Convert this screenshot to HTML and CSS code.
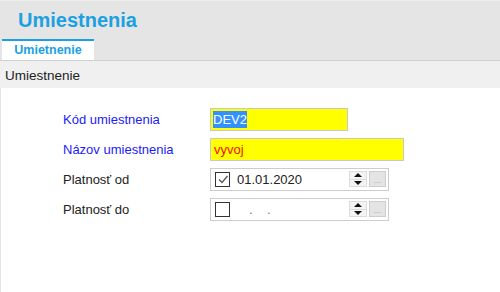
FILE: index.html
```html
<!DOCTYPE html>
<html lang="sk">
<head>
    <meta charset="UTF-8">
    <title>Umiestnenia</title>
    <link rel="stylesheet" href="styles.css">
</head>
<body>
    <header class="top">
        <h1 class="title">Umiestnenia</h1>
        <div class="tabs">
            <div class="tab active">Umietnenie</div>
        </div>
    </header>

    <div class="band">Umiestnenie</div>

    <main class="form">
        <div class="row">
            <label class="lbl req">Kód umiestnenia</label>
            <div class="input short"><span class="sel">DEV2</span></div>
        </div>
        <div class="row">
            <label class="lbl req">Názov umiestnenia</label>
            <div class="input long red">vyvoj</div>
        </div>
        <div class="row">
            <label class="lbl">Platnosť od</label>
            <div class="date">
                <span class="check on">
                    <svg width="12" height="12" viewBox="0 0 12 12"><path d="M2 6.5 L5 9.5 L10.5 3" fill="none" stroke="#555" stroke-width="1.3"/></svg>
                </span>
                <span class="dtext">01.01.2020</span>
                <span class="spin"><span class="up"></span><span class="down"></span></span>
                <span class="dots">...</span>
            </div>
        </div>
        <div class="row">
            <label class="lbl">Platnosť do</label>
            <div class="date">
                <span class="check"></span>
                <span class="dtext empty">.&nbsp;&nbsp;&nbsp;&nbsp;.</span>
                <span class="spin"><span class="up"></span><span class="down"></span></span>
                <span class="dots">...</span>
            </div>
        </div>
    </main>
</body>
</html>
```

FILE: styles.css
```css
body {
    margin: 0;
    font-family: 'Liberation Sans', Arial, sans-serif;
    background: #fff;
    height: 292px;
    display: flex;
    flex-direction: column;
}
.top {
    height: 61px;
    background: #e5e5e5;
    border-top: 1px solid #eeeeee;
    border-bottom: 1px solid #d2d2d2;
    box-sizing: border-box;
    display: flex;
    flex-direction: column;
    justify-content: space-between;
}
.title {
    margin: 0;
    padding: 7px 0 0 18px;
    font-size: 20px;
    font-weight: bold;
    color: #1ba1e2;
    line-height: 24px;
}
.tabs {
    display: flex;
    padding-left: 2px;
}
.tab {
    width: 92px;
    height: 21px;
    box-sizing: border-box;
    border-top: 2px solid #1ba1e2;
    background: #fff;
    color: #1ba1e2;
    font-size: 12.5px;
    font-weight: bold;
    text-align: center;
    line-height: 18px;
}
.band {
    height: 27px;
    background: #f0f0f0;
    font-size: 13.5px;
    color: #222;
    padding-left: 5px;
    line-height: 30px;
}
.form {
    flex: 1;
    border-left: 1px solid #e4e4e4;
    padding: 16px 0 0 62px;
}
.row {
    display: flex;
    align-items: center;
    height: 30px;
}
.lbl {
    width: 147px;
    font-size: 13px;
    color: #222;
}
.lbl.req {
    color: #1c1cf5;
}
.input {
    height: 23px;
    box-sizing: border-box;
    border: 1px solid #c8c8c8;
    background: #ffff00;
    font-size: 13px;
    padding: 3px 2px;
    line-height: 15px;
}
.input.short {
    width: 138px;
}
.input.long {
    width: 194px;
}
.input.red {
    color: #f01010;
    padding-left: 3px;
}
.sel {
    background: #3390ff;
    color: #fff;
    padding: 1px 0;
}
.date {
    width: 179px;
    height: 23px;
    box-sizing: border-box;
    border: 1px solid #cdcdcd;
    background: #fff;
    display: flex;
    align-items: center;
    padding-left: 4px;
}
.check {
    width: 15px;
    height: 15px;
    box-sizing: border-box;
    border: 1px solid #333;
    display: flex;
    align-items: center;
    justify-content: center;
}
.dtext {
    flex: 1;
    font-size: 13px;
    color: #222;
    padding-left: 7px;
}
.dtext.empty {
    padding-left: 19px;
    color: #777;
}
.spin {
    width: 18px;
    height: 16px;
    display: flex;
    flex-direction: column;
    border: 1px solid #dcdcdc;
    box-sizing: border-box;
}
.spin span {
    flex: 1;
    display: flex;
    align-items: center;
    justify-content: center;
    background: #f4f4f4;
}
.spin .up {
    border-bottom: 1px solid #dcdcdc;
}
.spin .up::after {
    content: '';
    border-left: 4px solid transparent;
    border-right: 4px solid transparent;
    border-bottom: 4px solid #111;
}
.spin .down::after {
    content: '';
    border-left: 4px solid transparent;
    border-right: 4px solid transparent;
    border-top: 4px solid #111;
}
.dots {
    width: 17px;
    height: 16px;
    box-sizing: border-box;
    margin: 0 2px 0 2px;
    background: #e4e4e4;
    border: 1px solid #cdcdcd;
    color: #b8a878;
    font-size: 9px;
    text-align: center;
    line-height: 17px;
}
```
